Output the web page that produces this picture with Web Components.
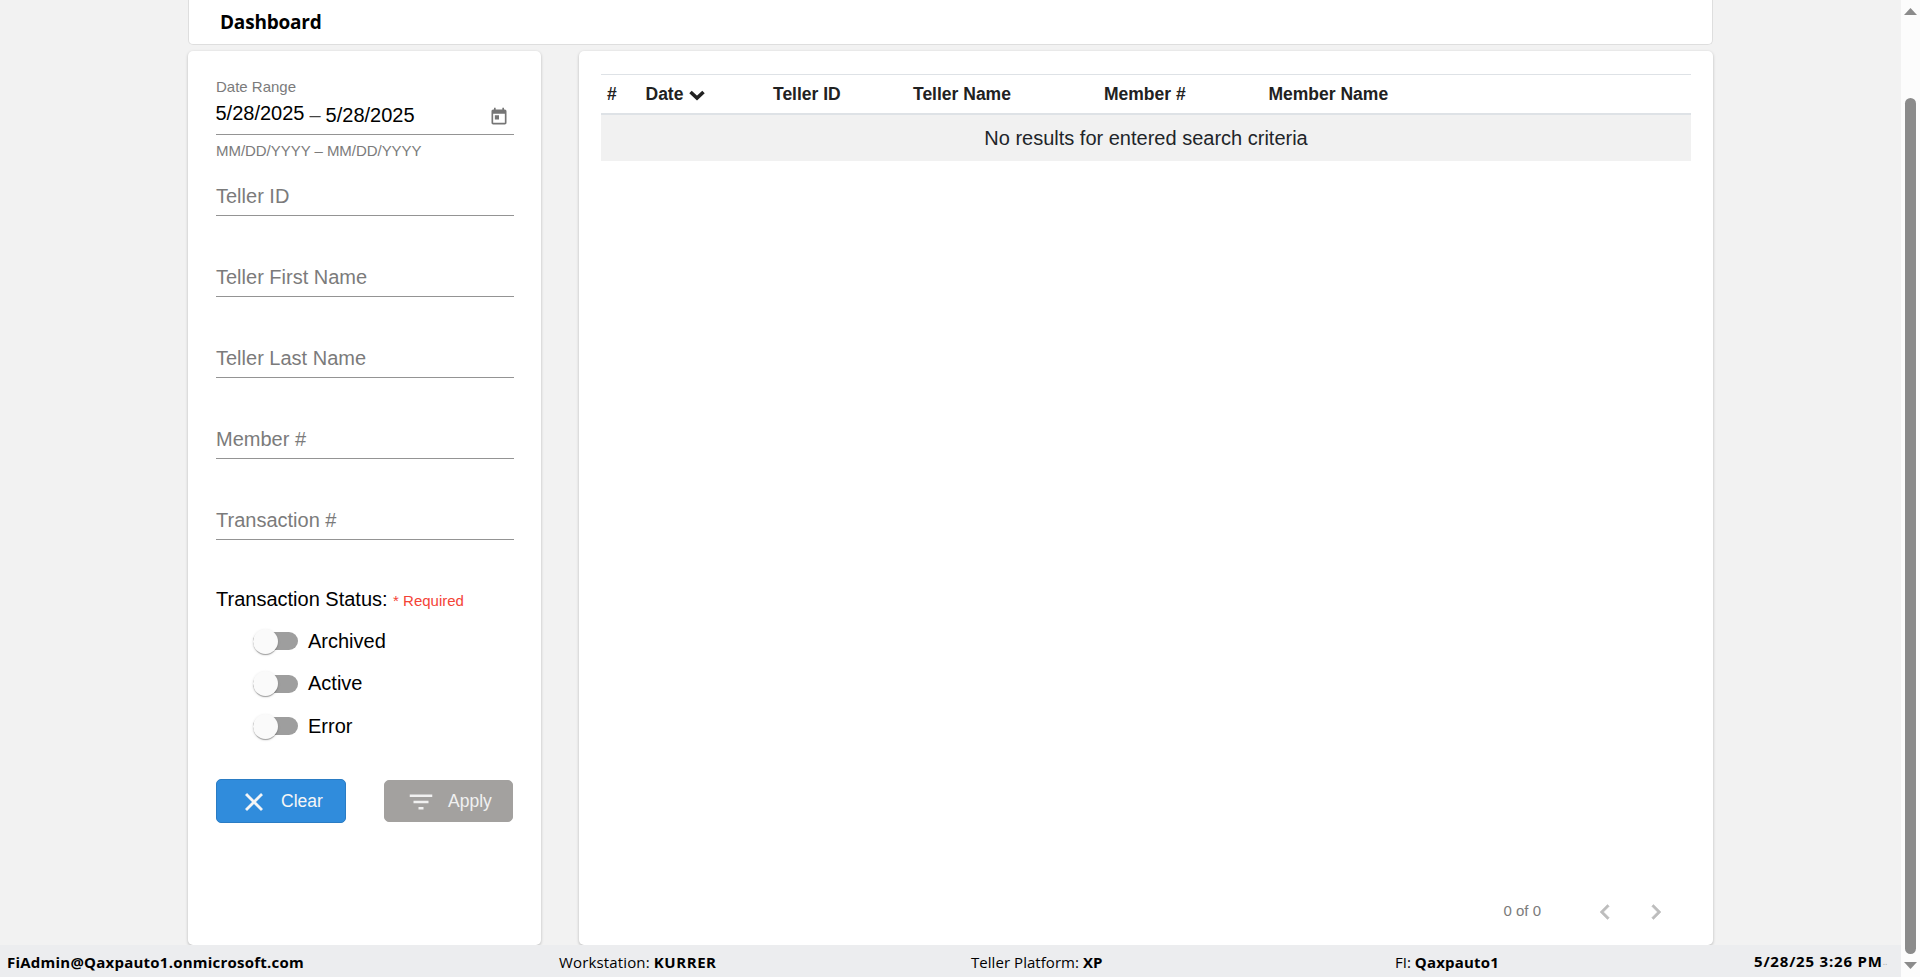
<!DOCTYPE html>
<html lang="en">
<head>
<meta charset="utf-8">
<title>Dashboard</title>
<style>
  html, body {
    margin: 0;
    height: 100%;
    overflow: hidden;
    background: #f2f2f2;
    font-family: "Liberation Sans", Arial, sans-serif;
  }
</style>
</head>
<body>
<teller-app></teller-app>

<script>
class BaseElement extends HTMLElement {
  constructor() {
    super();
    this._sR = this.attachShadow({ mode: "open" });
  }

  attr(name) {
    return this.getAttribute(name) || "";
  }

  connectedCallback() {
    this._sR.innerHTML = this.render();
  }
}

class PageTitle extends BaseElement {
  render() {
    return `
      <style>
        :host {
          box-sizing: border-box;
          display: flex;
          align-items: center;
          width: 1525px;
          height: 45px;
          padding-left: 31px;
          background: #fff;
          border: 1px solid #dedede;
          border-top: 0;
          border-radius: 0 0 5px 5px;
          font: bold 19px/26px "Open Sans", sans-serif;
          letter-spacing: -0.2px;
        }
      </style>
      <slot></slot>
    `;
  }
}

class AppCard extends BaseElement {
  render() {
    return `
      <style>
        :host {
          box-sizing: border-box;
          display: flex;
          flex-direction: column;
          background: #fff;
          border-radius: 5px;
          box-shadow: 0 1px 3px rgba(0, 0, 0, 0.25);
        }
      </style>
      <slot></slot>
    `;
  }
}

class DateRange extends BaseElement {
  render() {
    return `
      <style>
        :host { display: block; height: 82px; color: #7b7b7b; font-size: 15px; }
        .label { height: 20px; line-height: 20px; }
        .row {
          box-sizing: border-box;
          display: flex;
          height: 38px;
          border-bottom: 1px solid #949494;
          font-size: 20px;
          line-height: 23px;
          color: #000;
        }
        .start { padding-top: 5px; margin-left: -0.5px; }
        .dash { padding: 7px 5px 0; color: #444; }
        .end { padding-top: 7px; }
        svg { margin: 10px 5px 0 auto; }
        .hint { padding-top: 6px; line-height: 20px; letter-spacing: -0.04px; }
      </style>
      <div class="label">${this.attr("label")}</div>
      <div class="row">
        <span class="start">${this.attr("start")}</span>
        <span class="dash">–</span>
        <span class="end">${this.attr("end")}</span>
        <svg width="20" height="20" viewBox="0 0 24 24" fill="#757575">
          <path d="M19 3h-1V1h-2v2H8V1H6v2H5c-1.110 0-2 .9-2 2v14c0 1.100.89 2 2 2h14c1.100 0 2-.9 2-2V5c0-1.100-.9-2-2-2zm0 16H5V8h14v11zM7 10h5v5H7z"/>
        </svg>
      </div>
      <div class="hint">${this.attr("hint")}</div>
    `;
  }
}

class TextField extends BaseElement {
  render() {
    return `
      <style>
        :host {
          box-sizing: border-box;
          display: block;
          height: 33px;
          margin-bottom: 48px;
          border-bottom: 1px solid #949494;
          color: #7b7b7b;
          font-size: 20px;
          line-height: 23px;
        }
        span { display: block; padding-top: 2px; }
      </style>
      <span>${this.attr("label")}</span>
    `;
  }
}

class SlideToggle extends BaseElement {
  render() {
    return `
      <style>
        :host { display: flex; align-items: center; height: 42.5px; font-size: 20px; }
        .track {
          display: flex;
          align-items: center;
          width: 45px;
          height: 18px;
          border-radius: 9px;
          background: #9e9e9e;
          margin-right: 10px;
        }
        .thumb {
          width: 25px;
          height: 25px;
          border-radius: 50%;
          background: #fafafa;
          box-shadow: 0 2px 1px -1px rgba(0,0,0,.2), 0 1px 1px rgba(0,0,0,.14), 0 1px 3px rgba(0,0,0,.12);
        }
      </style>
      <div class="track"><div class="thumb"></div></div>
      <slot></slot>
    `;
  }
}

class ActionButton extends BaseElement {
  render() {
    return `
      <style>
        :host {
          box-sizing: border-box;
          display: flex;
          align-items: center;
          width: 130px;
          height: 44px;
          padding: 0 0 0 21.5px;
          border: 1px solid #2a7cc4;
          border-radius: 5px;
          background: #308cdc;
          color: #f6f6f6;
          font-size: 17.5px;
        }
        :host([disabled]) {
          width: 129px;
          height: 42px;
          padding-left: 20.5px;
          border-color: #a3a19f;
          background: #a3a19f;
          color: #f1f1f1;
        }
        ::slotted(svg) { margin: 2px 12.5px 0 0; }
      </style>
      <slot name="icon"></slot>
      <slot></slot>
    `;
  }
}

class FilterPanel extends BaseElement {
  render() {
    return `
      <style>
        :host { display: flex; flex-direction: column; padding: 26px 27px 0 28px; }
        .fields { padding-top: 24px; }
        .status { display: flex; align-items: baseline; gap: 5.5px; height: 30px; margin-top: -1px; font-size: 20px; line-height: 24px; }
        .required { color: #f44336; font-size: 15px; }
        .toggles { padding: 3px 0 0 37px; }
        .buttons { display: flex; align-items: center; justify-content: space-between; margin-top: 31.7px; padding-right: 1px; }
      </style>
      <date-range label="Date Range" start="5/28/2025" end="5/28/2025" hint="MM/DD/YYYY – MM/DD/YYYY"></date-range>
      <div class="fields">
        <text-field label="Teller ID"></text-field>
        <text-field label="Teller First Name"></text-field>
        <text-field label="Teller Last Name"></text-field>
        <text-field label="Member #"></text-field>
        <text-field label="Transaction #"></text-field>
      </div>
      <div class="status">Transaction Status: <span class="required">* Required</span></div>
      <div class="toggles">
        <slide-toggle>Archived</slide-toggle>
        <slide-toggle>Active</slide-toggle>
        <slide-toggle>Error</slide-toggle>
      </div>
      <div class="buttons">
        <action-button>
          <svg slot="icon" width="30" height="30" viewBox="0 0 24 24" fill="#f6f6f6"><path d="M19 6.410L17.590 5 12 10.590 6.410 5 5 6.410 10.590 12 5 17.590 6.410 19 12 13.410 17.590 19 19 17.590 13.410 12z" stroke="#f6f6f6" stroke-width=".3"/></svg>Clear</action-button>
        <action-button disabled>
          <svg slot="icon" width="30" height="30" viewBox="0 0 24 24" fill="#f1f1f1"><path d="M10 18h4v-2h-4v2zM3 6v2h18V6H3zm3 7h12v-2H6v2z"/></svg>Apply</action-button>
      </div>
    `;
  }
}

class ResultsTable extends BaseElement {
  render() {
    const columns = this.attr("columns").split(",");
    const sortIcon = `<svg width="16" height="11" viewBox="0 0 16 11"><path d="M1.500 2L8 8L14.500 2" fill="none" stroke="#212121" stroke-width="3.600"/></svg>`;
    const cells = columns
      .map((name) => `<span>${name}${name === this.attr("sort") ? sortIcon : ""}</span>`)
      .join("");

    return `
      <style>
        :host { display: block; }
        .head {
          display: grid;
          grid-template-columns: 38.5px 127.5px 140px 191px 164.5px 1fr;
          align-items: center;
          height: 38px;
          padding-left: 6px;
          border-top: 1px solid #dee2e6;
          border-bottom: 2px solid #dee2e6;
          color: #212121;
          font-size: 17.5px;
          font-weight: bold;
        }
        .head span { display: flex; align-items: center; gap: 6px; }
        .head svg { margin-top: 2px; }
        .empty {
          height: 46px;
          background: #f1f1f1;
          color: #212529;
          font-size: 20px;
          line-height: 47px;
          text-align: center;
        }
      </style>
      <div class="head">${cells}</div>
      <div class="empty"><slot></slot></div>
    `;
  }
}

class PageNav extends BaseElement {
  render() {
    return `
      <style>
        :host {
          display: flex;
          align-items: center;
          justify-content: flex-end;
          height: 50px;
          margin-top: auto;
          color: #7b7b7b;
          font-size: 15px;
        }
        .range { margin: 0 49px 1px 0; }
        svg { margin-top: 2px; }
        svg + svg { margin-left: 21px; }
      </style>
      <span class="range"><slot></slot></span>
      <svg width="30" height="30" viewBox="0 0 24 24" fill="#bdbdbd"><path d="M15.410 7.410L14 6l-6 6 6 6 1.410-1.410L10.830 12z" stroke="#bdbdbd" stroke-width=".4"/></svg>
      <svg width="30" height="30" viewBox="0 0 24 24" fill="#bdbdbd"><path d="M10 6L8.590 7.410 13.170 12l-4.580 4.590L10 18l6-6z" stroke="#bdbdbd" stroke-width=".4"/></svg>
    `;
  }
}

class StatusBar extends BaseElement {
  render() {
    return `
      <style>
        :host {
          box-sizing: border-box;
          display: grid;
          grid-template-columns: 552px 412px 424px 359px 1fr;
          align-items: center;
          height: 32px;
          padding: 1px 0 0 7px;
          background: #ecedef;
          color: #000;
          font: 15px/22px "Open Sans", sans-serif;
          white-space: nowrap;
        }
        .user { letter-spacing: 0.23px; }
        .station { letter-spacing: 0.15px; }
        .station b { letter-spacing: 0.55px; }
        .platform { letter-spacing: 0.05px; }
        .fi b { letter-spacing: 0.2px; }
        .time { display: flex; letter-spacing: 0.8px; }
        .dots { color: #aaa; font-size: 9px; line-height: 24px; letter-spacing: 0; }
      </style>
      <span class="user"><b>FiAdmin@Qaxpauto1.onmicrosoft.com</b></span>
      <span class="station">Workstation: <b>KURRER</b></span>
      <span class="platform">Teller Platform: <b>XP</b></span>
      <span class="fi">FI: <b>Qaxpauto1</b></span>
      <span class="time"><b>5/28/25 3:26 PM</b><span class="dots">..</span></span>
    `;
  }
}

class ScrollRail extends BaseElement {
  render() {
    return `
      <style>
        :host {
          box-sizing: border-box;
          display: flex;
          flex-direction: column;
          align-items: center;
          width: 19px;
          padding: 8px 0;
          background: #fcfcfc;
        }
        svg { flex: none; }
        .thumb { width: 11px; height: 856px; margin-top: 83px; margin-bottom: auto; border-radius: 6px; background: #8b8b8b; }
      </style>
      <svg width="13" height="7"><path d="M0 7L6.500 0L13 7z" fill="#8b8b8b"/></svg>
      <div class="thumb"></div>
      <svg width="13" height="7"><path d="M0 0L6.500 7L13 0z" fill="#8b8b8b"/></svg>
    `;
  }
}

class TellerApp extends BaseElement {
  render() {
    return `
      <style>
        :host { display: flex; height: 977px; }
        .page { display: flex; flex-direction: column; width: 1901px; }
        .main { display: flex; flex-direction: column; height: 945px; padding-left: 188px; }
        .cards { display: flex; gap: 38px; height: 894px; margin-top: 6px; }
        .filters { width: 353px; }
        .results { width: 1134px; padding: 23px 22px 9px; }
        page-nav { padding-right: 20px; }
      </style>
      <div class="page">
        <div class="main">
          <page-title>Dashboard</page-title>
          <div class="cards">
            <app-card class="filters"><filter-panel></filter-panel></app-card>
            <app-card class="results">
              <results-table columns="#,Date,Teller ID,Teller Name,Member #,Member Name" sort="Date">No results for entered search criteria</results-table>
              <page-nav>0 of 0</page-nav>
            </app-card>
          </div>
        </div>
        <status-bar></status-bar>
      </div>
      <scroll-rail></scroll-rail>
    `;
  }
}

customElements.define("page-title", PageTitle);
customElements.define("app-card", AppCard);
customElements.define("date-range", DateRange);
customElements.define("text-field", TextField);
customElements.define("slide-toggle", SlideToggle);
customElements.define("action-button", ActionButton);
customElements.define("filter-panel", FilterPanel);
customElements.define("results-table", ResultsTable);
customElements.define("page-nav", PageNav);
customElements.define("status-bar", StatusBar);
customElements.define("scroll-rail", ScrollRail);
customElements.define("teller-app", TellerApp);
</script>
</body>
</html>
